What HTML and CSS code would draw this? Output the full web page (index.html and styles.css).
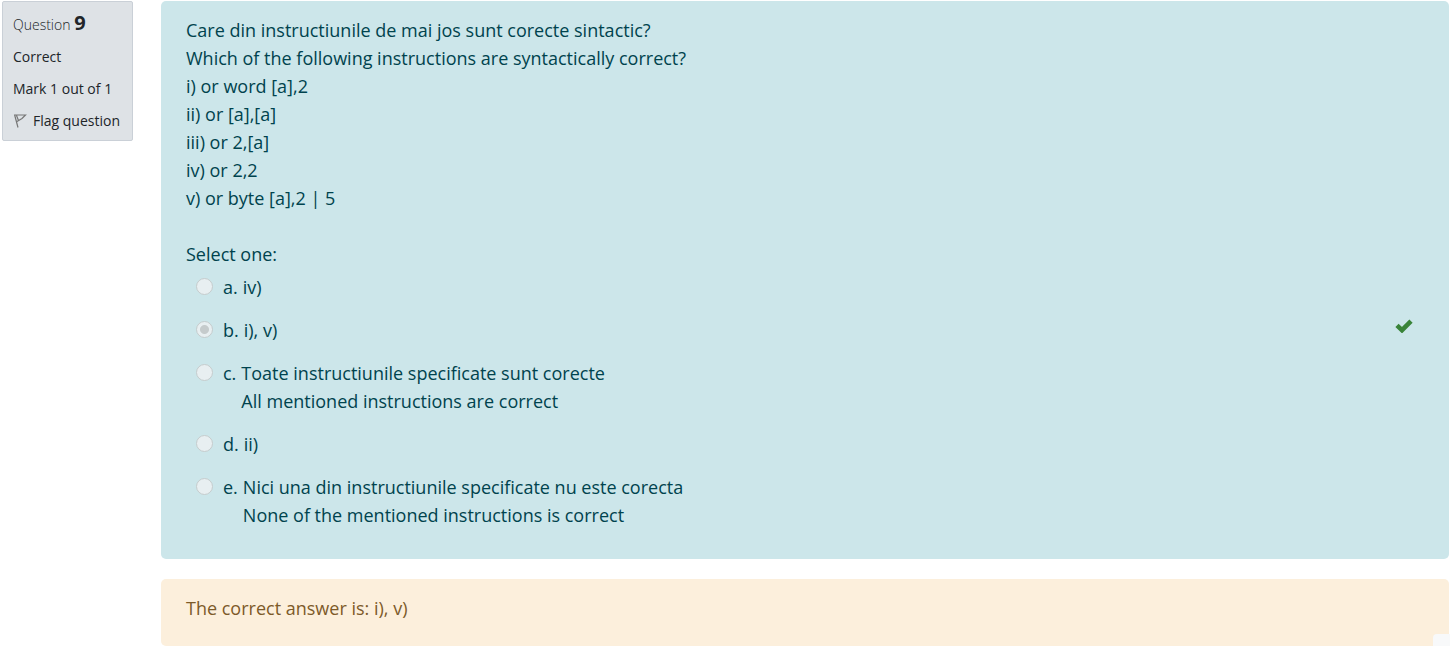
FILE: index.html
```
<!DOCTYPE html>
<html lang="en">
<head>
<meta charset="utf-8">
<title>Question 9</title>
<link rel="stylesheet" href="styles.css">
</head>
<body>
<main class="question">
  <aside class="info">
    <h3 class="number">Question <strong>9</strong></h3>
    <div class="state">Correct</div>
    <div class="grade">Mark 1 out of 1</div>
    <a class="flag" href="#">
      <svg width="14" height="16" viewBox="0 0 14 16" aria-hidden="true"><path d="M1.5 1.5 L5 14.5 M1.5 2 H12.5 L9 5.5 L4 8.5 M3.5 2.5 L5.5 7.5" fill="none" stroke="#777" stroke-width="1.2"/></svg>
      <span>Flag question</span>
    </a>
  </aside>
  <div class="content">
    <section class="formulation">
      <p class="text">Care din instructiunile de mai jos sunt corecte sintactic?<br>
        Which of the following instructions are syntactically correct?<br>
        i) or word [a],2<br>
        ii) or [a],[a]<br>
        iii) or 2,[a]<br>
        iv) or 2,2<br>
        v) or byte [a],2 | 5</p>
      <fieldset class="answers">
        <legend>Select one:</legend>
        <div class="answer">
          <input type="radio" name="answer" id="a" disabled>
          <label for="a"><span>a.</span><span>iv)</span></label>
        </div>
        <div class="answer">
          <input type="radio" name="answer" id="b" checked disabled>
          <label for="b"><span>b.</span><span>i), v)</span></label>
          <svg class="tick" width="18" height="14" viewBox="0 0 18 14" role="img" aria-label="Correct"><path d="M2 6.4 L7 11.2 L16 2.2" fill="none" stroke="#398439" stroke-width="4.6"/></svg>
        </div>
        <div class="answer">
          <input type="radio" name="answer" id="c" disabled>
          <label for="c"><span>c.</span><span>Toate instructiunile specificate sunt corecte<br>All mentioned instructions are correct</span></label>
        </div>
        <div class="answer">
          <input type="radio" name="answer" id="d" disabled>
          <label for="d"><span>d.</span><span>ii)</span></label>
        </div>
        <div class="answer">
          <input type="radio" name="answer" id="e" disabled>
          <label for="e"><span>e.</span><span>Nici una din instructiunile specificate nu este corecta<br>None of the mentioned instructions is correct</span></label>
        </div>
      </fieldset>
    </section>
    <section class="feedback">The correct answer is: i), v)</section>
  </div>
</main>
<div class="corner"></div>
</body>
</html>
```
FILE: styles.css
```
* {
  box-sizing: border-box;
}

body {
  margin: 0;
  background: #fff;
  color: #212529;
  font: 18px/28px "Segoe UI", "Open Sans", sans-serif;
  overflow: hidden;
}

.question {
  display: flex;
  align-items: flex-start;
  gap: 28px;
  padding: 1px 1px 0 2px;
}

.info {
  flex: none;
  width: 131px;
  padding: 9px 0 7px 10px;
  border: 1px solid #cad0d7;
  border-radius: 2px;
  background: #dee2e6;
  font-size: 14px;
  line-height: 24px;
  white-space: nowrap;
}

.number {
  margin: 0 0 8px;
  font-size: 14px;
  font-weight: 300;
}

.number strong {
  font-size: 20px;
  font-weight: 700;
}

.grade {
  margin: 8px 0;
}

.flag {
  display: flex;
  align-items: center;
  gap: 6px;
  color: inherit;
  text-decoration: none;
}

.content {
  flex: 1;
  min-width: 0;
}

.formulation {
  padding: 15px 25px 30px;
  border-radius: 5px;
  background: #cce6ea;
  color: #00434e;
}

.text {
  margin: 0 0 28px;
}

.answers {
  display: flex;
  flex-direction: column;
  gap: 15px;
  margin: 0;
  padding: 0;
  border: 0;
}

.answers legend {
  padding: 0;
  margin-bottom: 5px;
}

.answer {
  display: flex;
  align-items: flex-start;
  padding: 0 11px 0 10px;
}

.answer input {
  appearance: none;
  flex: none;
  width: 17px;
  height: 17px;
  margin: 5px 10px 0 0;
  border: 1px solid #c5cccd;
  border-radius: 50%;
  background: #e8eff1;
}

.answer input:checked {
  background: radial-gradient(circle, #c5cbcc 4px, #e8eff1 5px);
}

.answer label {
  display: flex;
  gap: 5px;
}

.tick {
  margin: 3px 0 0 auto;
}

.feedback {
  margin-top: 20px;
  padding: 15px 25px 24px;
  border-radius: 5px;
  background: #fcefdc;
  color: #7d5a29;
}

.corner {
  position: fixed;
  right: 0;
  bottom: 0;
  width: 17px;
  height: 12px;
  border-top-left-radius: 4px;
  background: #f8f9fa;
}
```
